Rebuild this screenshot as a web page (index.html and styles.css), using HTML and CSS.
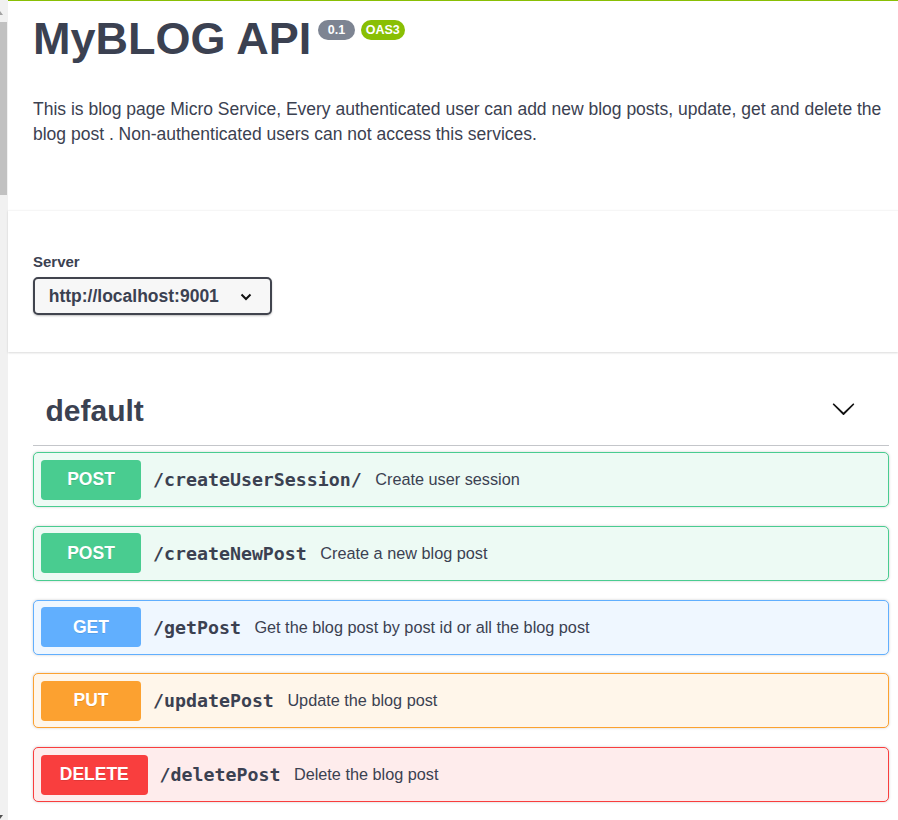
FILE: index.html
```html
<!DOCTYPE html>
<html lang="en">
<head>
<meta charset="utf-8">
<title>MyBLOG API</title>
<link rel="stylesheet" href="styles.css">
</head>
<body>
<div class="page">
  <div class="scrollbar">
    <div class="arrow-up"></div>
    <div class="thumb"></div>
    <div class="spacer"></div>
    <div class="arrow-down"></div>
  </div>
  <div class="main">
    <section class="info">
      <div class="wrapper">
        <h2 class="title">MyBLOG API<small class="badge ver"><pre> 0.1 </pre></small><small class="badge oas"><pre>OAS3</pre></small></h2>
        <p class="desc">This is blog page Micro Service, Every authenticated user can add new blog posts, update, get and delete the blog post . Non-authenticated users can not access this services.</p>
      </div>
    </section>
    <section class="schemes">
      <div class="wrapper">
        <div class="servers-label">Server</div>
        <div class="select">
          <span>http://localhost:9001</span>
          <svg class="sel-chev" width="12" height="8" viewBox="0 0 12 8"><polyline points="1.5,1.5 6,6 10.5,1.5" fill="none" stroke="#111" stroke-width="2"/></svg>
        </div>
      </div>
    </section>
    <section class="ops">
      <div class="wrapper">
        <div class="tag">
          <h3 class="tag-name">default</h3>
          <svg class="tag-arrow" width="25" height="25" viewBox="0 0 20 20"><path d="M17.418 6.109c.272-.268.709-.268.979 0s.271.701 0 .969l-7.908 7.83c-.27.268-.707.268-.979 0l-7.908-7.830c-.27-.268-.27-.701 0-.969.271-.268.709-.268.979 0L10 13.25l7.418-7.141z" fill="#111"/></svg>
        </div>
        <div class="opblock post">
          <span class="method">POST</span>
          <span class="path">/createUserSession/</span>
          <span class="summary">Create user session</span>
        </div>
        <div class="opblock post">
          <span class="method">POST</span>
          <span class="path">/createNewPost</span>
          <span class="summary">Create a new blog post</span>
        </div>
        <div class="opblock get">
          <span class="method">GET</span>
          <span class="path">/getPost</span>
          <span class="summary">Get the blog post by post id or all the blog post</span>
        </div>
        <div class="opblock put">
          <span class="method">PUT</span>
          <span class="path">/updatePost</span>
          <span class="summary">Update the blog post</span>
        </div>
        <div class="opblock delete">
          <span class="method">DELETE</span>
          <span class="path">/deletePost</span>
          <span class="summary">Delete the blog post</span>
        </div>
      </div>
    </section>
  </div>
</div>
</body>
</html>
```
FILE: styles.css
```css
html, body {
  margin: 0;
  padding: 0;
  height: 820px;
  overflow: hidden;
  background: #fff;
}
body {
  font-family: "Liberation Sans", Arial, sans-serif;
  color: #3b4151;
}
.page {
  display: flex;
  height: 820px;
}
.scrollbar {
  width: 8px;
  flex: 0 0 8px;
  background: #f1f1f1;
  display: flex;
  flex-direction: column;
  padding-top: 11px;
  box-sizing: border-box;
}
.arrow-up {
  width: 3px;
  height: 4px;
  background: #a3a3a3;
  clip-path: polygon(0 0, 100% 100%, 0 100%);
}
.thumb {
  width: 7px;
  height: 173px;
  margin-top: 7px;
  background: #c1c1c1;
}
.spacer { flex: 1; }
.arrow-down {
  width: 3px;
  height: 4px;
  margin-bottom: 1px;
  background: #505050;
  clip-path: polygon(0 0, 100% 0, 0 100%);
}
.main {
  flex: 1;
  border-top: 1px solid #89bf04;
  min-width: 0;
}
.wrapper {
  padding: 0 9px 0 25px;
}
.info {
  padding: 12px 0 63px;
}
.title {
  display: flex;
  align-items: flex-start;
  margin: 0;
  font-size: 45px;
  line-height: 52px;
  font-weight: 700;
  color: #3b4151;
}
.badge {
  display: inline-block;
  margin: 7px 0 0 6px;
  padding: 2.5px 5px;
  border-radius: 57px;
  background: #7d8492;
  font-size: 12.5px;
  line-height: 15px;
}
.badge.ver { padding: 2.5px 6px; margin-left: 7px; }
.badge.oas { background: #89bf04; }
.badge pre {
  margin: 0;
  font-family: "Liberation Sans", Arial, sans-serif;
  font-weight: 700;
  color: #fff;
}
.desc {
  margin: 32px 0 0;
  font-size: 17.5px;
  line-height: 25px;
}
.schemes {
  padding: 42px 0 37px;
  margin-bottom: 25px;
  border-top: 1px solid #f6f6f6;
  box-shadow: 0 1px 2px 0 rgba(0, 0, 0, .15);
  background: #fff;
}
.servers-label {
  font-size: 15px;
  line-height: 18px;
  font-weight: 700;
}
.select {
  margin-top: 6px;
  width: 239px;
  height: 38px;
  box-sizing: border-box;
  display: flex;
  align-items: center;
  padding-left: 13.7px;
  border: 2px solid #41444e;
  border-radius: 5px;
  background: #f7f7f7;
  box-shadow: 0 1px 2px 0 rgba(0, 0, 0, .25);
  font-size: 17.5px;
  font-weight: 700;
  color: #3b4151;
}
.sel-chev {
  margin-left: 21px;
  margin-top: 1px;
}
.tag {
  display: flex;
  align-items: flex-start;
  justify-content: space-between;
  padding: 16px 33px 16px 12.5px;
  border-bottom: 1px solid rgba(59, 65, 81, .3);
  margin-bottom: 6px;
}
.tag-name {
  margin: 0;
  font-size: 30px;
  line-height: 36px;
  font-weight: 700;
  color: #3b4151;
}
.tag-arrow {
  margin-top: 2.5px;
}
.opblock {
  display: flex;
  align-items: center;
  height: 55px;
  box-sizing: border-box;
  padding: 0 7px;
  margin-bottom: 18.75px;
  border: 1px solid;
  border-radius: 5px;
  box-shadow: 0 0 3px rgba(0, 0, 0, .19);
}
.method {
  min-width: 100px;
  box-sizing: border-box;
  padding: 7.5px 18.75px;
  border-radius: 3.75px;
  font-size: 17.5px;
  line-height: 25px;
  font-weight: 700;
  color: #fff;
  text-align: center;
  text-shadow: 0 1px 0 rgba(0, 0, 0, .1);
}
.path {
  padding: 0 13.5px 0 12px;
  font-family: "DejaVu Sans Mono", "Liberation Mono", monospace;
  font-size: 18.25px;
  font-weight: 700;
  color: #3b4151;
}
.summary {
  font-size: 16.25px;
  color: #3b4151;
}
.post { border-color: #49cc90; background: #edfaf4; }
.post .method { background: #49cc90; }
.get { border-color: #61affe; background: #eff7ff; }
.get .method { background: #61affe; }
.put { border-color: #fca130; background: #fff6ea; }
.put .method { background: #fca130; }
.delete { border-color: #f93e3e; background: #feecec; }
.delete .method { background: #f93e3e; }
```
